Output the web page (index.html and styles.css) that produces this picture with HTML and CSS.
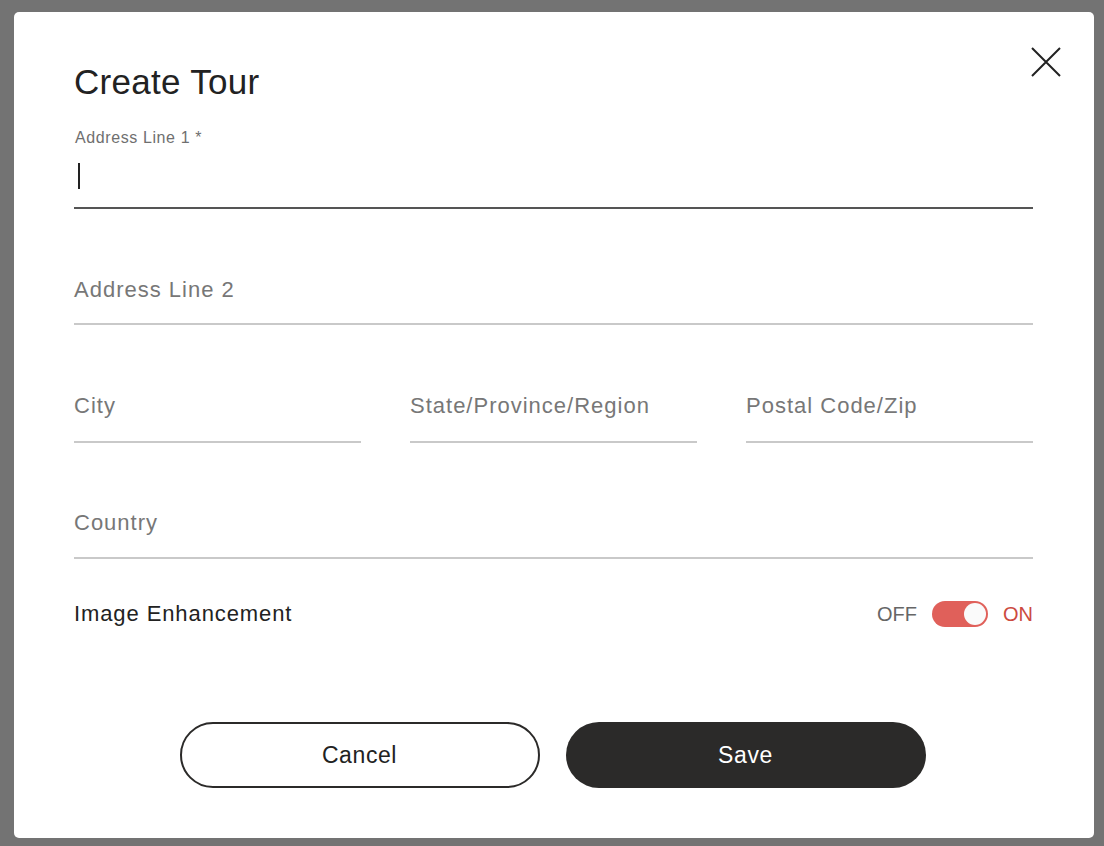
FILE: index.html
```html
<!DOCTYPE html>
<html lang="en">
<head>
  <meta charset="UTF-8">
  <title>Create Tour</title>
  <link rel="stylesheet" href="styles.css">
</head>
<body>

  <div class="backdrop">
    <div class="modal">
      <button class="close-btn" type="button" aria-label="Close">
        <svg width="32" height="32" viewBox="0 0 32 32">
          <path d="M2 2 L30 30 M30 2 L2 30" stroke="#222" stroke-width="2" fill="none"/>
        </svg>
      </button>

      <h2>Create Tour</h2>

      <form class="tour-form">
        <div class="field field-active">
          <label class="field-label">Address Line 1 *</label>
          <div class="field-input"><span class="caret"></span></div>
        </div>

        <div class="field">
          <div class="field-input placeholder">Address Line 2</div>
        </div>

        <div class="field-row">
          <div class="field">
            <div class="field-input placeholder">City</div>
          </div>
          <div class="field">
            <div class="field-input placeholder">State/Province/Region</div>
          </div>
          <div class="field">
            <div class="field-input placeholder">Postal Code/Zip</div>
          </div>
        </div>

        <div class="field field-country">
          <div class="field-input placeholder">Country</div>
        </div>

        <div class="toggle-row">
          <span class="toggle-title">Image Enhancement</span>
          <div class="toggle">
            <span class="toggle-off">OFF</span>
            <span class="switch"><span class="knob"></span></span>
            <span class="toggle-on">ON</span>
          </div>
        </div>

        <div class="actions">
          <button type="button" class="btn btn-cancel">Cancel</button>
          <button type="submit" class="btn btn-save">Save</button>
        </div>
      </form>
    </div>
  </div>

</body>
</html>
```

FILE: styles.css
```css
body {
  margin: 0;
  font-family: "Liberation Sans", Arial, sans-serif;
  background-color: #737373;
}

.backdrop {
  height: 846px;
  padding: 12px 10px 0 14px;
  box-sizing: border-box;
}

.modal {
  position: relative;
  width: 1080px;
  height: 826px;
  box-sizing: border-box;
  padding: 50px 61px 50px 60px;
  background-color: #fff;
  border-radius: 5px;
}

.close-btn {
  position: absolute;
  top: 34px;
  right: 32px;
  padding: 0;
  border: none;
  background: none;
  width: 32px;
  height: 32px;
}

h2 {
  margin: 0;
  font-size: 35px;
  line-height: 40px;
  font-weight: normal;
  letter-spacing: 0.3px;
  color: #222;
}

.tour-form {
  display: flex;
  flex-direction: column;
}

.field {
  border-bottom: 2px solid #c9c9c9;
  margin-top: 69px;
}

.field-active {
  margin-top: 27px;
  border-bottom-color: #555;
}

.field-label {
  display: block;
  font-size: 16px;
  line-height: 18px;
  letter-spacing: 0.6px;
  color: #6f6f6f;
  padding-left: 1px;
}

.field-input {
  height: 24px;
  padding-bottom: 21px;
  font-size: 22px;
  line-height: 24px;
  letter-spacing: 1px;
  color: #222;
}

.field-active .field-input {
  padding-top: 17px;
  padding-bottom: 19px;
}

.field-row .field-input {
  padding-bottom: 23px;
}

.field-country {
  margin-top: 68px;
}

.field-country .field-input {
  padding-bottom: 22px;
}

.placeholder {
  color: #777;
}

.caret {
  display: inline-block;
  width: 2px;
  height: 26px;
  margin: -1px 0 0 4px;
  background-color: #222;
  vertical-align: top;
}

.field-row {
  display: flex;
  gap: 49px;
}

.field-row .field {
  flex: 1;
}

.toggle-row {
  display: flex;
  justify-content: space-between;
  align-items: center;
  margin-top: 42px;
  height: 26px;
}

.toggle-title {
  font-size: 22px;
  letter-spacing: 0.9px;
  color: #222;
}

.toggle {
  display: flex;
  align-items: center;
  font-size: 20px;
}

.toggle-off {
  color: #666;
}

.toggle-on {
  color: #cc4a40;
}

.switch {
  display: flex;
  justify-content: flex-end;
  align-items: center;
  width: 56px;
  height: 26px;
  margin: 0 15px;
  padding: 2px;
  box-sizing: border-box;
  border-radius: 13px;
  background-color: #e0605a;
}

.knob {
  width: 22px;
  height: 22px;
  border-radius: 50%;
  background-color: #fafafa;
}

.actions {
  display: flex;
  justify-content: center;
  gap: 26px;
  margin-top: 95px;
  padding-right: 2px;
}

.btn {
  width: 360px;
  height: 66px;
  border-radius: 33px;
  font-family: "Liberation Sans", Arial, sans-serif;
  font-size: 23px;
  letter-spacing: 0.6px;
}

.btn-cancel {
  background-color: #fff;
  border: 2px solid #2b2a29;
  color: #222;
}

.btn-save {
  background-color: #2b2a29;
  border: none;
  color: #fff;
}
```
